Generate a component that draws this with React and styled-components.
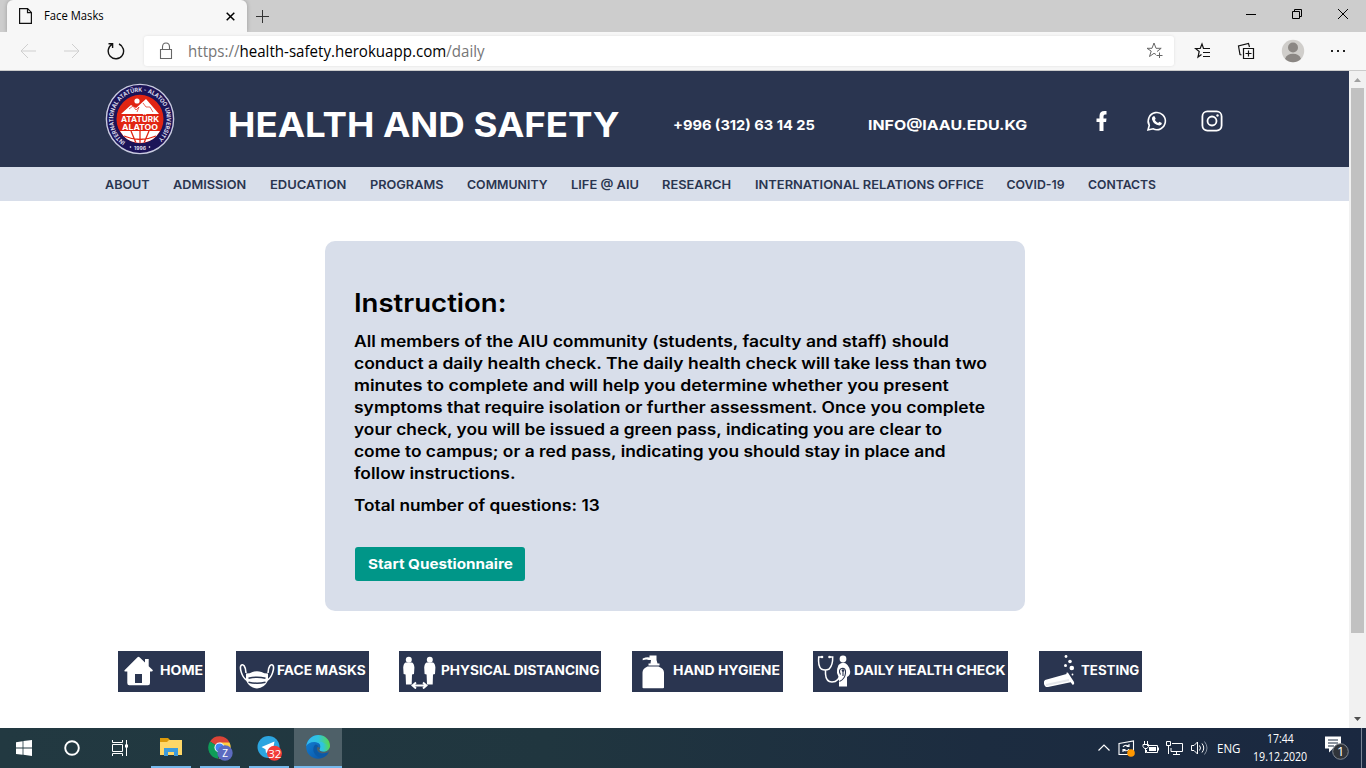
import React, { useLayoutEffect, useRef, useState } from "react";
import styled, { createGlobalStyle } from "styled-components";

const NAVY = "#2a3550";
const PALE = "#d8deea";

const Global = createGlobalStyle`
  * { box-sizing: border-box; }
  html, body { margin: 0; height: 768px; overflow: hidden; background: #fff; }
  body { font-family: Inter, "Liberation Sans", sans-serif; }
`;

/* Text that is stretched to the given width */
const FitBox = styled.span`
  display: inline-block;
  flex: none;
  width: ${(p) => p.$w}px;
  white-space: nowrap;
  text-align: left;
`;
const FitInner = styled.span`
  display: inline-block;
  transform-origin: 0 50%;
`;
function Fit({ w, children }) {
  const ref = useRef(null);
  const [k, setK] = useState(1);
  useLayoutEffect(() => {
    setK(w / ref.current.offsetWidth);
  }, [w]);
  return (
    <FitBox $w={w}>
      <FitInner ref={ref} style={{ transform: `scaleX(${k})` }}>{children}</FitInner>
    </FitBox>
  );
}

const Screen = styled.div`
  width: 1366px;
  height: 768px;
  display: flex;
  flex-direction: column;
  overflow: hidden;
`;

/* ---------- browser chrome ---------- */
const TabStrip = styled.div`
  height: 32px;
  flex: none;
  display: flex;
  align-items: center;
  background: #cdcdcd;
  padding-left: 7px;
`;
const Tab = styled.div`
  width: 240px;
  height: 32px;
  display: flex;
  align-items: center;
  padding: 0 12px 0 12px;
  background: #f7f7f7;
  border-radius: 6px 6px 0 0;
  box-shadow: 0 0 4px rgba(0, 0, 0, 0.25);
  clip-path: inset(0 -6px 0 -6px);
  font: 12px "Open Sans", sans-serif;
`;
const TabTitle = styled.span`
  flex: 1;
  padding: 0 0 1px 12px;
`;
const Plus = styled.svg`
  margin-left: 8px;
`;
const WindowButtons = styled.div`
  margin-left: auto;
  display: flex;
  padding: 0 17px 4px 0;
  gap: 34px;
`;
const Toolbar = styled.div`
  height: 39px;
  flex: none;
  display: flex;
  align-items: center;
  background: #f7f7f7;
  border-bottom: 1px solid #cbcbcb;
  padding: 0 20px 0 20px;
`;
const NavIcons = styled.div`
  display: flex;
  gap: 27.5px;
  width: 124px;
`;
const Address = styled.div`
  width: 1030px;
  height: 30px;
  display: flex;
  align-items: center;
  background: #fff;
  border-radius: 3px;
  box-shadow: 0 0 3px rgba(0, 0, 0, 0.1);
  padding: 0 10px 0 15px;
  color: #767676;
  font: 15.5px "Open Sans", sans-serif;
  & b { color: #000; font-weight: 400; }
`;
const Url = styled.span`
  flex: 1;
  padding-left: 14px;
`;
const ToolIcons = styled.div`
  display: flex;
  align-items: center;
  margin-left: auto;
  gap: 25.5px;
`;

/* ---------- page ---------- */
const Viewport = styled.div`
  flex: 1;
  display: flex;
  min-height: 0;
`;
const Page = styled.div`
  width: 1349px;
  display: flex;
  flex-direction: column;
  background: #fff;
`;
const Header = styled.header`
  height: 96px;
  flex: none;
  display: flex;
  align-items: center;
  padding-left: 105px;
  background: ${NAVY};
  color: #fff;
  font-weight: 700;
`;
const Title = styled.h1`
  margin: 0 53px 0 53px;
  padding-top: 11px;
  font-size: 33.6px;
  line-height: 44px;
  font-weight: 750;
`;
const Contact = styled.span`
  margin-right: ${(p) => p.$gap}px;
  padding-top: 12px;
  font-size: 13.8px;
  line-height: 20px;
`;
const Social = styled.div`
  display: flex;
  align-items: center;
  gap: 33px;
  padding-top: 4px;
`;
const Menu = styled.nav`
  height: 34px;
  flex: none;
  display: flex;
  align-items: center;
  gap: 23.5px;
  padding-left: 104.5px;
  background: ${PALE};
  color: ${NAVY};
  font-size: 12.3px;
  font-weight: 600;
`;
const Card = styled.section`
  width: 700px;
  height: 370px;
  flex: none;
  margin: 40px 0 0 325px;
  padding: 44px 30px 30px;
  border-radius: 10px;
  background: ${PALE};
  color: #000;
`;
const Heading = styled.h2`
  margin: 0 0 10px -1px;
  font-size: 25px;
  line-height: 36px;
  font-weight: 600;
`;
const Copy = styled.p`
  margin: 0 0 10px -0.7px;
  display: flex;
  flex-direction: column;
  font-size: 15.5px;
  line-height: 22px;
  font-weight: 600;
`;
const Start = styled.button`
  display: flex;
  align-items: center;
  justify-content: flex-start;
  width: 170px;
  height: 34px;
  margin-top: 30px;
  padding: 0 0 0 12.5px;
  border: 0;
  border-radius: 3px;
  background: #009688;
  color: #fff;
  font: 700 13.8px Inter, sans-serif;
`;
const Tiles = styled.div`
  display: flex;
  gap: 30.6px;
  margin: 40px 0 0 118px;
`;
const Tile = styled.a`
  height: 41px;
  width: ${(p) => p.$w}px;
  display: flex;
  align-items: center;
  justify-content: space-between;
  padding: 0 2.5px 2px 3px;
  background: ${NAVY};
  color: #fff;
  font-size: 12.8px;
  font-weight: 700;
`;
const Scrollbar = styled.div`
  width: 17px;
  display: flex;
  flex-direction: column;
  align-items: center;
  justify-content: space-between;
  background: #f1f1f1;
`;
const Thumb = styled.div`
  width: 13px;
  height: 545px;
  margin-bottom: auto;
  background: #c1c1c1;
`;

/* ---------- taskbar ---------- */
const Taskbar = styled.footer`
  height: 40px;
  flex: none;
  display: flex;
  background: linear-gradient(90deg, #223941 0%, #20363f 40%, #1c2c40 72%, #1a2840 100%);
  color: #fff;
`;
const TaskButton = styled.div`
  width: ${(p) => p.$w || 48}px;
  height: 40px;
  display: flex;
  align-items: center;
  justify-content: center;
  background: ${(p) => (p.$active ? "#4e6068" : "none")};
`;
const Running = styled(TaskButton)`
  width: ${(p) => (p.$active ? 48 : 40)}px;
  margin-left: ${(p) => p.$ml}px;
  border-bottom: 2px solid #76b9ed;
`;
const Tray = styled.div`
  margin-left: auto;
  display: flex;
  align-items: center;
  font: 12px "Open Sans", sans-serif;
`;
const TrayIcons = styled.div`
  display: flex;
  align-items: center;
  gap: 7px;
  margin-right: 9px;
`;
const Clock = styled.div`
  display: flex;
  flex-direction: column;
  align-items: center;
  margin: 0 17px 0 13px;
  line-height: 18px;
`;
const ShowDesktop = styled.div`
  width: 5px;
  height: 40px;
  margin-left: 11px;
  border-left: 1px solid #7a8494;
`;

const Line = ({ d, w = 20, h = 20, c = "#000", s = 1, fill = "none" }) => (
  <svg width={w} height={h} viewBox={`0 0 ${w} ${h}`} fill={fill} stroke={c} strokeWidth={s}>
    <path d={d} />
  </svg>
);

function Logo() {
  return (
    <svg width="70" height="72" viewBox="0 0 70 72" fontFamily="Inter, sans-serif" fontWeight="700">
      <defs>
        <path id="ringTop" d="M20.500 59A26.700 27.300 0 1 1 49.500 59" />
        <clipPath id="disc"><ellipse cx="35" cy="36" rx="23.5" ry="24" /></clipPath>
      </defs>
      <ellipse cx="35" cy="36" rx="33.6" ry="34.6" fill="#1c1458" stroke="#c9cbe0" strokeWidth="1.4" />
      <ellipse cx="35" cy="36" rx="23.5" ry="24.2" fill="#e12513" />
      <g clipPath="url(#disc)" fill="#fff">
        <circle cx="32" cy="18" r="2.6" />
        <path d="M16 31 26 22l5 3 10-9 13 15z" />
        <path d="M15 48h40L49 57 35 61 21 57z" />
        <path d="M35 48v13M26 48l5 12M44 48l-5 12M19 53q16 7 32 0" fill="none" stroke="#e12513" strokeWidth="1.3" />
      </g>
      <path d="m24 26 4-3 3 4 3-3-2 5M38 20l3 4 4 0 3 5" fill="none" stroke="#e12513" strokeWidth=".7" />
      <g fill="#fff">
        <text x="16" y="38.5" fontSize="7.6" textLength="38" lengthAdjust="spacingAndGlyphs">ATATÜRK</text>
        <text x="17" y="47" fontSize="7.4" textLength="36" lengthAdjust="spacingAndGlyphs">ALATOO</text>
        <g fontSize="6" fill="#dcdcec">
          <text textLength="134" lengthAdjust="spacingAndGlyphs"><textPath href="#ringTop">INTERNATIONAL ATATÜRK - ALATOO UNIVERSITY</textPath></text>
          <text x="29" y="67" fontSize="5.2" textLength="12" lengthAdjust="spacingAndGlyphs">1996</text>
        </g>
        <circle cx="25.5" cy="64" r=".8" /><circle cx="44.5" cy="64" r=".8" />
      </g>
    </svg>
  );
}

const icons = {
  home: (
    <svg width="34" height="36" viewBox="0 0 34 36" fill="#fff">
      <path d="M3.5 17.2 16.5 4.2q1-.8 2 0L24 9.5V6h3.7v7.3l4 3.8q.6 1.3-1 1.4H29V30q0 2.2-2 2.2H8.3q-2 0-2-2.2V18.5H4.4q-1.6 0-.9-1.3z" />
      <path d="M14 21h7v9h-7z" fill={NAVY} />
    </svg>
  ),
  mask: (
    <svg width="36" height="36" viewBox="0 0 36 36" fill="none" stroke="#fff" strokeWidth="1.6">
      <path d="M7.5 27C2.5 24 .5 14.500 2 12.500 3.800 10.200 6.800 13 7 20M28.500 27c5-3 7-12.500 5.500-14.500-1.800-2.300-4.800.5-5 7.500" />
      <path d="M7 20.500q4 0 6.500-1.500 4.500-1.700 9 0 2.500 1.500 6.500 1.500v7q-3.500 7.500-11 8-7.500-.5-11-8z" fill="#fff" stroke="none" />
      <path d="M9.500 25.200q8.500-2 17 0M9.500 29.200q8.500 2 17 0" stroke={NAVY} strokeWidth="1.500" />
    </svg>
  ),
  people: (
    <svg width="34" height="36" viewBox="0 0 34 36" fill="#fff">
      {[0, 21].map((x) => (
        <g key={x} transform={`translate(${x} 0)`}>
          <circle cx="6.800" cy="6.700" r="3" />
          <path d="M3.500 9.500h6.600q2 1 2.300 5l-.4 6.500-2 .5-.3 10H4l-.4-10-2-.5-.4-6.500q.3-4 2.300-5z" />
        </g>
      ))}
      <path d="M11 32.500h13M14 29.500l-3.500 3 3.500 3M21 29.500l3.500 3-3.500 3" fill="none" stroke="#fff" strokeWidth="1.900" />
    </svg>
  ),
  bottle: (
    <svg width="34" height="36" viewBox="0 0 34 36" fill="#fff">
      <path d="M14.500 2.500h7v4.500l1 3.500h2v2H13.500v-2h2l.5-3.500h-2.300q-2-1.200-6 .2V5.500q4-1.700 6.800-1zM12.500 13.500h11q5.500 2 5.500 6v15q0 .8-1 .8h-19.500q-1 0-1-.8V19.500q0-4 5-6z" />
    </svg>
  ),
  check: (
    <svg width="36" height="36" viewBox="0 0 36 36" fill="#fff">
      <path d="M5 4H2.700q-.8 9 2.500 12 4 2 8 0 3.700-4 3.500-12H14M9.500 17v4q.5 8 6.500 8 7 0 9-9" fill="none" stroke="#fff" strokeWidth="1.500" />
      <circle cx="6" cy="4" r="1.300" /><circle cx="13.500" cy="4" r="1.300" />
      <circle cx="27" cy="6" r="3.400" />
      <path d="M22.500 12q5-4.500 9 0 2.500 3 2.700 6.500.3 3.500-3.200 5.500v9.500h-8v-8.500L21 20q-.5-4 1.500-8z" />
      <path d="M24.500 21.500q-2.500-4.500 1-6 4.500-1 4 4.500-.5 6-6 8.500M27 18v5" fill="none" stroke={NAVY} strokeWidth="1.100" />
      <circle cx="27" cy="17.500" r="1.300" fill={NAVY} />
    </svg>
  ),
  tube: (
    <svg width="35" height="36" viewBox="0 0 35 36" fill="#fff">
      <path d="m3 27 21.500-6q-.5-2 1.500-1.200l6 9.200q.7 3-1.500 2.700l-1.800-2.500L6 34q-3 .7-4-3-.5-3 1-4z" />
      <path d="M4 32 27 27" stroke="#e6e8ec" strokeWidth="2" />
      <circle cx="24" cy="3.500" r="1.400" /><circle cx="28" cy="8.500" r="1.800" /><circle cx="23.500" cy="12.500" r="1.500" /><circle cx="29.800" cy="15" r="2.300" /><circle cx="30.500" cy="21.500" r=".9" />
    </svg>
  ),
};

const menu = [
  ["ABOUT", 45], ["ADMISSION", 73.500], ["EDUCATION", 76], ["PROGRAMS", 73.500], ["COMMUNITY", 80.500],
  ["LIFE @ AIU", 68], ["RESEARCH", 69], ["INTERNATIONAL RELATIONS OFFICE", 228.500], ["COVID-19", 58], ["CONTACTS", 68.500],
];
const copy = [
  ["All members of the AIU community (students, faculty and staff) should", 594.500],
  ["conduct a daily health check. The daily health check will take less than two", 633.500],
  ["minutes to complete and will help you determine whether you present", 594.500],
  ["symptoms that require isolation or further assessment. Once you complete", 630.500],
  ["your check, you will be issued a green pass, indicating you are clear to", 588.500],
  ["come to campus; or a red pass, indicating you should stay in place and", 591.500],
  ["follow instructions.", 161],
];
const tiles = [
  ["home", "HOME", 87, 43], ["mask", "FACE MASKS", 133, 89], ["people", "PHYSICAL DISTANCING", 202, 158],
  ["bottle", "HAND HYGIENE", 151, 107], ["check", "DAILY HEALTH CHECK", 195, 151.500], ["tube", "TESTING", 103, 58],
];

export default function App() {
  return (
    <Screen>
      <Global />
      <TabStrip>
        <Tab>
          <svg width="13" height="16" viewBox="0 0 13 16" fill="none" stroke="#111" strokeWidth="1.200">
            <path d="M.6.600h8l3.800 3.800v11H.6zM8.500.600v4h4" />
          </svg>
          <TabTitle><Fit w={60}>Face Masks</Fit></TabTitle>
          <Line w={9} h={9} s={1.500} d="M.7.7l7.600 7.600M8.300.7.7 8.300" />
        </Tab>
        <Plus width="15" height="15" viewBox="0 0 15 15" stroke="#333" strokeWidth="1"><path d="M7.500 1v13M1 7.500h13" /></Plus>
        <WindowButtons>
          <Line w={12} h={12} d="M1 6.500h10" />
          <Line w={12} h={12} d="M1.500 3.500h7v7h-7zM3.500 3v-1.500h7v7H9" />
          <Line w={12} h={12} d="M1 1l10 10M11 1 1 11" />
        </WindowButtons>
      </TabStrip>
      <Toolbar>
        <NavIcons>
          <Line w={16} h={18} c="#cfcfcf" d="M16 9H1M8 2 1 9l7 7" />
          <Line w={16} h={18} c="#cfcfcf" d="M0 9h15M8 2l7 7-7 7" />
          <Line w={18} h={18} c="#111" s={1.400} d="M5 2.400A7.700 7.700 0 1 0 12 2M1.500 1.700H5.600V6" />
        </NavIcons>
        <Address>
          <svg width="15" height="18" viewBox="0 0 15 18" fill="none" stroke="#666" strokeWidth="1.100">
            <path d="M1.500 7.500h11v9h-11zM3.500 7V5q0-4 3.500-4t3.500 4v2" />
          </svg>
          <Url><Fit w={297}>https://<b>health-safety.herokuapp.com</b>/daily</Fit></Url>
          <svg width="18" height="18" viewBox="0 0 18 18" fill="none" stroke="#666" strokeWidth="1">
            <path d="M10 12.500 8 11.300l-4.500 3.200 1.700-5.400L1 6.300h5L8 1l2 5.300h5.200L11 9.500M13.500 10.500v5.500M10.500 13.500h6" />
          </svg>
        </Address>
        <ToolIcons>
          <svg width="18" height="18" viewBox="0 0 18 18" fill="none" stroke="#111" strokeWidth="1.200">
            <path d="M10 6.500H9.500L8 2 6.200 6.500H1.500L5.200 9.500 4 15l3.500-2.500M9 6.500h7M9 10.500h7M9 14.500h7" />
          </svg>
          <svg width="18" height="18" viewBox="0 0 18 18" fill="none" stroke="#111" strokeWidth="1.200">
            <path d="M6.500 6.500h10v10h-10zM11.500 8.500v6M8.500 11.500h6M4.500 13 3 12.500 1.500 4l10-2.500 1 3.500" />
          </svg>
          <svg width="24" height="24" viewBox="0 0 24 24">
            <circle cx="12" cy="12" r="11.200" fill="#d0cecb" />
            <circle cx="12" cy="8.500" r="5" fill="#8b8784" />
            <path d="M4 19.800q2-5 8-5t8 5q-3 3.400-8 3.400t-8-3.400z" fill="#8b8784" />
          </svg>
          <svg width="16" height="4" viewBox="0 0 16 4" fill="#222"><path d="M1 1h2v2H1zM7 1h2v2H7zM13 1h2v2h-2z" /></svg>
        </ToolIcons>
      </Toolbar>

      <Viewport>
        <Page>
          <Header>
            <Logo />
            <Title><Fit w={392}>HEALTH AND SAFETY</Fit></Title>
            <Contact $gap={52.500}><Fit w={142}>+996 (312) 63 14 25</Fit></Contact>
            <Contact $gap={64}><Fit w={159}>INFO@IAAU.EDU.KG</Fit></Contact>
            <Social>
              <svg width="22" height="22" viewBox="0 0 22 22" fill="#fff">
                <path d="M8.500 21V12H5.500V8.500h3V6q0-5 5-5h2v3.500H14q-1.500 0-1.500 1.800V8.500h3l-.4 3.500h-2.600v9z" />
              </svg>
              <svg width="22" height="22" viewBox="0 0 22 22" fill="none" stroke="#fff" strokeWidth="1.600">
                <path d="m2 20 1.300-4.700A8.600 8.600 0 1 1 7 18.800z" />
                <path d="M7.300 6.200h1.300l1.100 2.600-.9 1.200q1.300 2.200 3.300 3l1.200-1.300 2.600 1.300q0 2.300-2.500 2.500-6-.9-7.500-6.500 0-2 1.400-2.800z" fill="#fff" stroke="none" />
              </svg>
              <svg width="22" height="22" viewBox="0 0 22 22" fill="none" stroke="#fff" strokeWidth="1.800">
                <rect x="1.400" y="1.400" width="19.200" height="19.200" rx="5" />
                <circle cx="11" cy="11" r="4.500" />
                <circle cx="16.500" cy="5.500" r="1.200" fill="#fff" stroke="none" />
              </svg>
            </Social>
          </Header>
          <Menu>{menu.map(([t, w]) => <Fit key={t} w={w}>{t}</Fit>)}</Menu>
          <Card>
            <Heading><Fit w={152}>Instruction:</Fit></Heading>
            <Copy>{copy.map(([t, w]) => <Fit key={t} w={w}>{t}</Fit>)}</Copy>
            <Copy><Fit w={245.500}>Total number of questions: 13</Fit></Copy>
            <Start><Fit w={144.500}>Start Questionnaire</Fit></Start>
          </Card>
          <Tiles>
            {tiles.map(([i, t, w, tw]) => (
              <Tile key={t} $w={w}>{icons[i]}<Fit w={tw}>{t}</Fit></Tile>
            ))}
          </Tiles>
        </Page>
        <Scrollbar>
          <svg width="17" height="17" viewBox="0 0 17 17" fill="#a0a0a0"><path d="M8.500 7 12 11H5z" /></svg>
          <Thumb />
          <svg width="17" height="17" viewBox="0 0 17 17" fill="#505050"><path d="M5 6h7L8.500 10z" /></svg>
        </Scrollbar>
      </Viewport>

      <Taskbar>
        <TaskButton>
          <svg width="16" height="16" viewBox="0 0 16 16" fill="#fff"><path d="M0 2.200 6.600 1.200v6.400H0zM7.400 1.100 16 0v7.600H7.400zM0 8.400h6.600v6.400L0 13.900zM7.400 8.400H16V16l-8.600-1.200z" /></svg>
        </TaskButton>
        <TaskButton><svg width="16" height="16" viewBox="0 0 16 16" fill="none" stroke="#fff" strokeWidth="1.900"><circle cx="8" cy="8" r="6.800" /></svg></TaskButton>
        <TaskButton>
          <svg width="17" height="16" viewBox="0 0 17 16" fill="none" stroke="#fff"><path d="M.5 0v2.500h10V0M.5 4.500h10v7H.5zM.5 16v-2.500h10V16M14.500 0v16" /><path d="M13 4.500h3v3h-3z" fill="#fff" stroke="none" /></svg>
        </TaskButton>
        <Running $ml={7}>
          <svg width="22" height="20" viewBox="0 0 22 20">
            <path d="M0 1h8l2 2h11v4H0z" fill="#dd9b0b" /><path d="M0 5h7l2-2h13v15H0z" fill="#ffd767" />
            <path d="M4 19v-8h14v8h-4v-4H8v4z" fill="#3d9bdc" />
          </svg>
        </Running>
        <Running $ml={9}>
          <svg width="26" height="27" viewBox="-1 -1.500 26 27" fontFamily="Open Sans, sans-serif">
            <path d="M11.500 12 2 6A11.200 11.200 0 0 1 21.500 7z" fill="#db4437" /><path d="M11.500 12 2 6a11.200 11.200 0 0 0 8 17.200z" fill="#0f9d58" /><path d="M11.500 7h10a11 11 0 0 1-11 16l4-9z" fill="#ffcd40" />
            <circle cx="11.500" cy="12" r="5" fill="#fff" /><circle cx="11.500" cy="12" r="4" fill="#4285f4" />
            <circle cx="17" cy="17.500" r="7.700" fill="#5c6bc0" /><text x="14.200" y="21" fontSize="10" fill="#fff">Z</text>
          </svg>
        </Running>
        <Running $ml={9}>
          <svg width="26" height="27" viewBox="-1 -1.500 26 27" fontFamily="Open Sans, sans-serif">
            <circle cx="11.500" cy="11.500" r="11" fill="#2ca5e0" /><path d="m4.500 11.500 13-5.500-2.500 13-4-3.200-2 2-.5-4z" fill="#fff" />
            <circle cx="17.500" cy="17.700" r="7.500" fill="#f23b37" /><text x="11.200" y="22" fontSize="11.500" fill="#fff">32</text>
          </svg>
        </Running>
        <Running $ml={5} $active>
          <svg width="24" height="24" viewBox="0 0 24 24">
            <defs>
              <linearGradient id="swirl"><stop stopColor="#35b8f2" /><stop offset=".5" stopColor="#2fc4df" /><stop offset="1" stopColor="#58d94b" /></linearGradient>
              <linearGradient id="sea" y2="1"><stop stopColor="#1184d8" /><stop offset="1" stopColor="#0b4d9e" /></linearGradient>
            </defs>
            <circle cx="12" cy="12" r="11.800" fill="url(#sea)" />
            <path d="M.2 11.300C1.500 4 6.500 0 12.300 0 19 0 24 5 24 10.500c0 4-3 6-6.500 6-3 0-4.500-1.300-3.700-2.400 2-2.500.2-7-5.300-7C4.500 7 1.500 8.800.2 11.300z" fill="url(#swirl)" />
            <path d="M9.500 9.500c-4 3-2.500 11 4.500 13 3 .5 7-2 8.500-4.500-3 2-11 2-11.500-3.500 0-2 1-3 1-3.500q-.5-1.500-2.500-1.500z" fill="#0c59a4" />
            <path d="M11.500 12c-2 4 3 8 10 5.500l2-1.500q.8-2 .3-5.500c0 4-3 6-6.300 6-3 0-4.500-1.300-3.700-2.400.5-1-.2-2.500-2.300-2.100z" fill="#4e6068" />
            <path d="M13.800 14c2-2.500 0-7-4-7h6l8 4c0 3.500-3 5.500-6.300 5.500-3 0-4.500-1.300-3.700-2.500z" fill="url(#swirl)" />
          </svg>
        </Running>
        <Tray>
          <TrayIcons>
            <Line w={14} h={14} c="#fff" s={1.200} d="m1.500 9.500 5.500-5.500 5.500 5.500" />
            <svg width="17" height="17" viewBox="0 0 17 17" fill="none" stroke="#fff" strokeWidth="1.100"><path d="M1 3.500 15.500 1v13.500H1zM5 7q2-3 5.500-1M11 4v2.500H8.500M11 9q-2 3-5.500 1M5 12V9.500h2.500" /><circle cx="13" cy="13" r="3.800" fill="#ff9800" stroke="none" /></svg>
            <svg width="17" height="16" viewBox="0 0 17 16" fill="none" stroke="#fff"><path d="M5 5.500h10.500v7H4.500V10M2.500 1v3M5.500 1v3M1 4.500h5.500v2L5 8.500H2.500L1 6.500zM3.500 8.500V13" /><path d="M7 7h7v4H7zM16 7.500h1v3h-1z" fill="#fff" stroke="none" /></svg>
            <svg width="17" height="16" viewBox="0 0 17 16" fill="none" stroke="#fff"><path d="M6 3.500h10.500v8H5V8M10.500 11.500v3M7 14.500h7M.5 1.500h4v4h-4zM2.500 5.500V14" /></svg>
            <svg width="18" height="16" viewBox="0 0 18 16" fill="none" stroke="#fff"><path d="M1.500 5.500H4L7.500 2v12L4 10.500H1.500zM9.500 5.500q2 2.500 0 5M12 3.500q3.500 4.500 0 9" /><path d="M14.500 1.500q5 6.500 0 13" stroke="#8993a2" /></svg>
          </TrayIcons>
          <Fit w={23}>ENG</Fit>
          <Clock><Fit w={27}>17:44</Fit><Fit w={54}>19.12.2020</Fit></Clock>
          <svg width="26" height="26" viewBox="0 -1.500 26 26" fontFamily="Open Sans, sans-serif">
            <path d="M1 0h16v12H9l-4 4v-4H1z" fill="#fff" /><path d="M4 3.500h10M4 6.500h10M4 9.500h6" stroke="#1b2a40" />
            <circle cx="16.500" cy="15" r="7.800" fill="#30343a" stroke="#808790" /><text x="13" y="19.500" fontSize="13" fill="#fff">1</text>
          </svg>
          <ShowDesktop />
        </Tray>
      </Taskbar>
    </Screen>
  );
}
